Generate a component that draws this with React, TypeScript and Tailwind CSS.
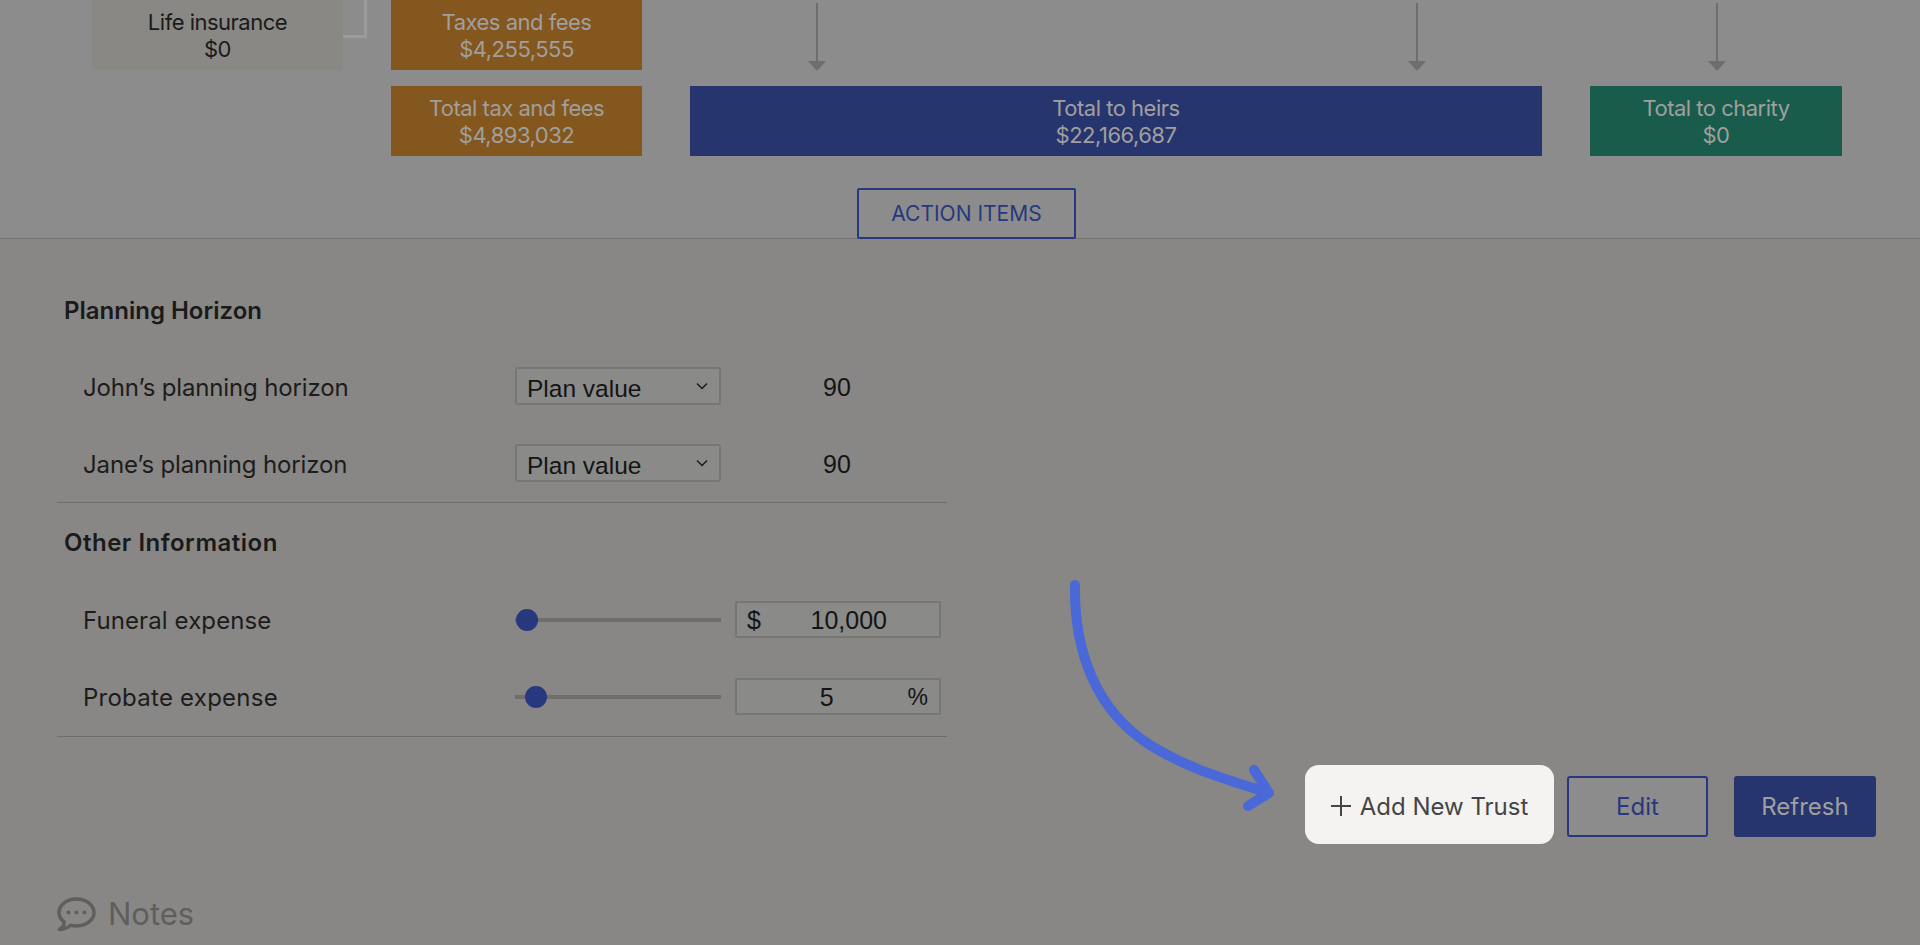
import React from "react";

const boxText = "flex flex-col items-center justify-center pt-[2px] text-[22px] leading-[27px] tracking-[-0.5px] text-[#a09f9d]";
const formLabel = "w-[432px] pt-[3px] text-[24px] text-[#1c1c1c]";
const mono = "font-['Liberation_Sans',sans-serif] text-[#141414]";

const DownArrow = ({ className }: { className: string }) => (
  <svg width="20" height="68" viewBox="0 0 20 68" className={className}>
    <line x1="10" y1="0" x2="10" y2="60" stroke="#6e6e6c" strokeWidth="2" />
    <path d="M1 58 H19 L10 68 Z" fill="#6e6e6c" />
  </svg>
);

const Chevron = () => (
  <svg width="14" height="9" viewBox="0 0 14 9" fill="none">
    <path d="M2 1.5 L7 6.5 L12 1.5" stroke="#1a1a1a" strokeWidth="1.5" />
  </svg>
);

const PlanRow = ({ label, className }: { label: string; className: string }) => (
  <div className={`flex items-center h-[38px] pl-[26px] ${className}`}>
    <div className={`${formLabel} tracking-[-0.15px]`}>{label}</div>
    <div className={`w-[206px] h-[38px] flex items-center justify-between pl-[10px] pr-[10px] bg-[#8a8a89] border-2 border-[#777673] rounded-[3px] text-[24.5px] ${mono}`}>
      <span className="pt-[6px]">Plan value</span>
      <Chevron />
    </div>
    <div className={`ml-[102px] pt-[3px] text-[25px] ${mono}`}>90</div>
  </div>
);

const Slider = ({ thumbClass }: { thumbClass: string }) => (
  <div className="relative w-[206px] h-[4px] bg-[#6f6e6c]">
    <div className={`absolute top-[-9px] w-[22px] h-[22px] rounded-full bg-[#27387f] ${thumbClass}`} />
  </div>
);

export default function App() {
  return (
    <div className="relative w-[1920px] h-[945px] overflow-hidden bg-[#888785] font-['Inter',sans-serif]">
      {/* flow diagram */}
      <div className="h-[239px] bg-[#8c8c8c] border-b border-[#757470]">
        <div className="flex h-[70px] pl-[92px]">
          <div className={`w-[251px] bg-[#898884] ${boxText} !text-[#1a1a1a]`}>
            <span>Life insurance</span>
            <span>$0</span>
          </div>
          <div className="w-[24px] h-[38px] border-r-[3px] border-b-[3px] border-[#9c9b99]" />
          <div className={`ml-[24px] w-[251px] bg-[#84571f] ${boxText}`}>
            <span>Taxes and fees</span>
            <span>$4,255,555</span>
          </div>
          <DownArrow className="ml-[165px] mt-[3px]" />
          <DownArrow className="ml-[580px] mt-[3px]" />
          <DownArrow className="ml-[280px] mt-[3px]" />
        </div>
        <div className="flex h-[70px] mt-[16px] pl-[391px]">
          <div className={`w-[251px] bg-[#84571f] ${boxText}`}>
            <span>Total tax and fees</span>
            <span>$4,893,032</span>
          </div>
          <div className={`ml-[48px] w-[852px] bg-[#27356f] ${boxText}`}>
            <span>Total to heirs</span>
            <span>$22,166,687</span>
          </div>
          <div className={`ml-[48px] w-[252px] bg-[#195c4c] ${boxText}`}>
            <span>Total to charity</span>
            <span>$0</span>
          </div>
        </div>
        <div className="ml-[857px] mt-[32px] w-[219px] h-[51px] flex items-center justify-center border-2 border-[#27387f] rounded-[2px] text-[21px] text-[#27387f]">
          ACTION ITEMS
        </div>
      </div>

      {/* form */}
      <div className="ml-[57px] w-[890px]">
        <div className="mt-[56px] pl-[7px] h-[32px] leading-[32px] text-[24px] font-semibold text-[#1a1a1a]">
          Planning Horizon
        </div>
        <PlanRow label="John’s planning horizon" className="mt-[40px]" />
        <PlanRow label="Jane’s planning horizon" className="mt-[39px]" />
        <div className="mt-[20px] border-t border-[#6f6e6c]" />

        <div className="mt-[24px] pl-[7px] h-[32px] leading-[32px] text-[24px] font-semibold text-[#1a1a1a] tracking-[0.5px]">
          Other Information
        </div>
        <div className="mt-[42px] flex items-center h-[37px] pl-[26px]">
          <div className={`${formLabel} tracking-[0.1px]`}>Funeral expense</div>
          <Slider thumbClass="left-[1px]" />
          <div className={`ml-[14px] w-[206px] h-[37px] flex items-center justify-between pl-[10px] pr-[52px] pt-[2px] bg-[#8a8a89] border-2 border-[#777673] rounded-[2px] text-[25px] ${mono}`}>
            <span>$</span>
            <span>10,000</span>
          </div>
        </div>
        <div className="mt-[40px] flex items-center h-[37px] pl-[26px]">
          <div className={`${formLabel} tracking-[0.25px]`}>Probate expense</div>
          <Slider thumbClass="left-[10px]" />
          <div className={`ml-[14px] w-[206px] h-[37px] flex items-center justify-end gap-[74px] pr-[11px] pt-[2px] bg-[#8a8a89] border-2 border-[#777673] rounded-[2px] text-[25px] ${mono}`}>
            <span>5</span>
            <span className="text-[23px]">%</span>
          </div>
        </div>
        <div className="mt-[21px] border-t border-[#6f6e6c]" />
      </div>

      {/* actions */}
      <div className="mt-[28px] h-[79px] flex items-center justify-end pr-[44px] text-[24px]">
        <div className="w-[249px] h-[79px] flex items-center justify-center gap-[9px] pt-[5px] bg-[#f4f3f1] rounded-[14px] text-[#454545]">
          <svg width="20" height="20" viewBox="0 0 20 20" className="mb-[3px]">
            <path d="M10 0 V20 M0 10 H20" stroke="#454545" strokeWidth="2" />
          </svg>
          <span>Add New Trust</span>
        </div>
        <div className="ml-[13px] mt-[4px] w-[141px] h-[61px] flex items-center justify-center pt-[1px] bg-[#8c8c8c] border-2 border-[#27387f] rounded-[3px] text-[#27387f]">
          Edit
        </div>
        <div className="ml-[26px] mt-[4px] w-[142px] h-[61px] flex items-center justify-center pt-[1px] bg-[#27356f] rounded-[3px] text-[#a09f9d]">
          Refresh
        </div>
      </div>

      {/* notes */}
      <div className="mt-[47px] ml-[57px] flex items-center gap-[12px] text-[31px] text-[#5f5e5c]">
        <svg width="39" height="34" viewBox="0 0 39 34" fill="none">
          <path
            d="M19.5 2C9.5 2 2 8.2 2 15.5C2 19.5 4 22.7 7.2 25C7.2 28 5.5 30.7 2.5 32.5C7 32.5 11 30.7 13.5 28.3C15.5 28.8 17.5 29 19.5 29C29.5 29 37 22.8 37 15.5C37 8.2 29.5 2 19.5 2Z"
            stroke="#5f5e5c"
            strokeWidth="3.5"
            strokeLinejoin="round"
          />
          <circle cx="11.5" cy="15.5" r="2" fill="#5f5e5c" />
          <circle cx="19.5" cy="15.5" r="2" fill="#5f5e5c" />
          <circle cx="27.5" cy="15.5" r="2" fill="#5f5e5c" />
        </svg>
        <span>Notes</span>
      </div>

      {/* callout arrow */}
      <svg width="1920" height="945" viewBox="0 0 1920 945" fill="none" className="absolute inset-0 pointer-events-none">
        <path
          d="M1075 585 C1074 650 1095 710 1150 745 C1190 770 1230 780 1268 793"
          stroke="#4a68d8"
          strokeWidth="10"
          strokeLinecap="round"
        />
        <path
          d="M1254 770 L1269 793 L1248 806"
          stroke="#4a68d8"
          strokeWidth="10"
          strokeLinecap="round"
          strokeLinejoin="round"
        />
      </svg>
    </div>
  );
}
